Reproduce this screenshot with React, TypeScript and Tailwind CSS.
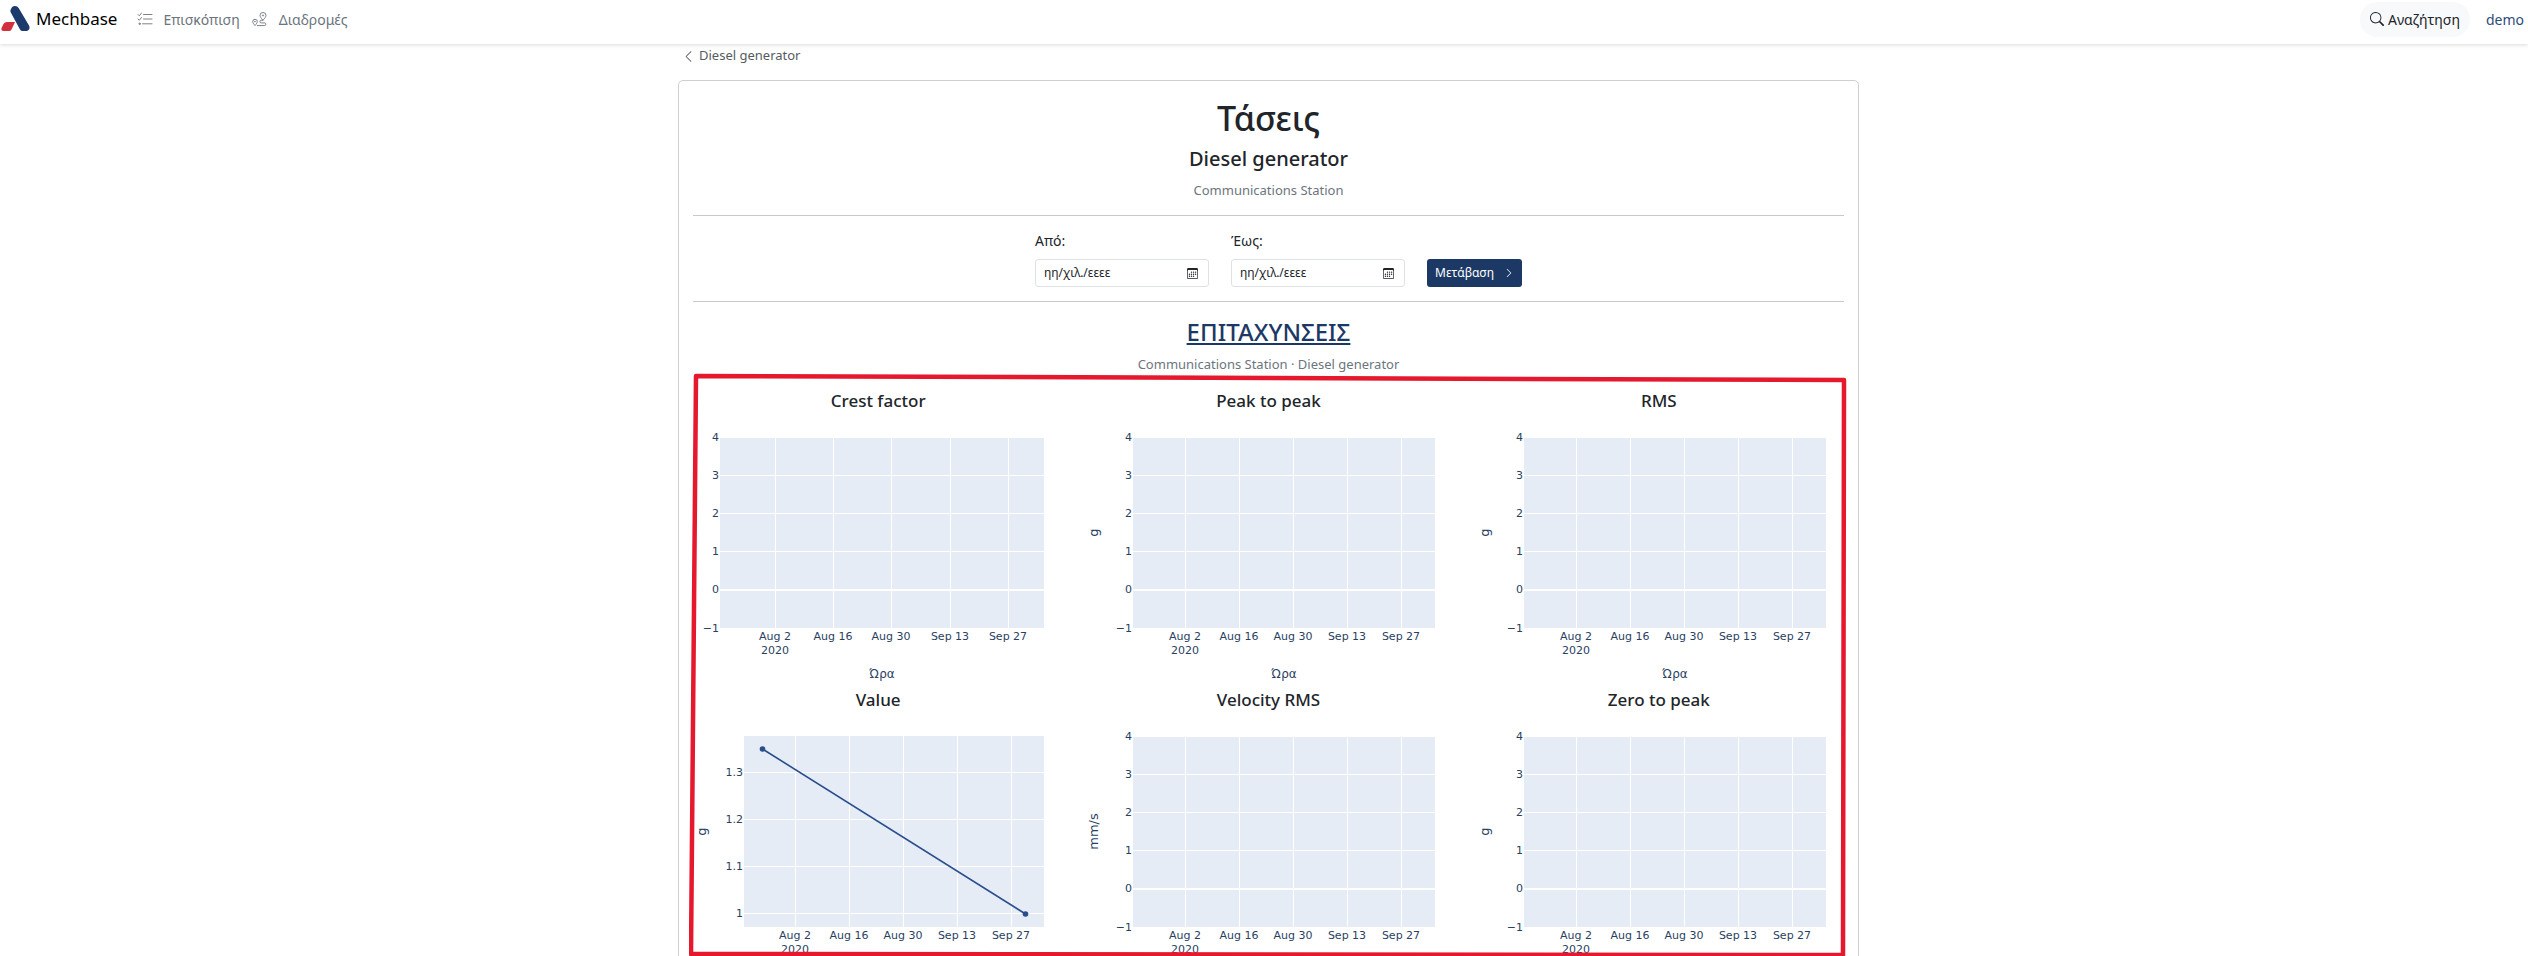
import React from "react";
import { BsSearch, BsChevronLeft, BsChevronRight, BsCalendar3 } from "react-icons/bs";

type Tick = { at: number; label: string; zero?: boolean };
type ChartProps = {
  title: string;
  unit?: string;
  left: number;
  right?: number;
  dates: number[];
  ticks: Tick[];
  points?: [number, number][];
};

const TOP = 24;
const BOTTOM = 215;
const DATE_LABELS = ["Aug 2", "Aug 16", "Aug 30", "Sep 13", "Sep 27"];
const EMPTY_TICKS: Tick[] = [
  { at: 24, label: "4" },
  { at: 62, label: "3" },
  { at: 100, label: "2" },
  { at: 138, label: "1" },
  { at: 176, label: "0", zero: true },
  { at: 215, label: "−1" },
];
const VALUE_TICKS: Tick[] = [
  { at: 60, label: "1.3" },
  { at: 107, label: "1.2" },
  { at: 154, label: "1.1" },
  { at: 201, label: "1" },
];
const MIDDLE_DATES = [112, 166, 220, 274, 328];

const CHARTS: ChartProps[] = [
  { title: "Crest factor", left: 37, right: 361, dates: [92, 150, 208, 267, 325], ticks: EMPTY_TICKS },
  { title: "Peak to peak", unit: "g", left: 60, dates: MIDDLE_DATES, ticks: EMPTY_TICKS },
  { title: "RMS", unit: "g", left: 60, dates: MIDDLE_DATES, ticks: EMPTY_TICKS },
  {
    title: "Value", unit: "g", left: 61, right: 361, dates: MIDDLE_DATES, ticks: VALUE_TICKS,
    points: [[79.5, 37], [342.5, 202]],
  },
  { title: "Velocity RMS", unit: "mm/s", left: 60, dates: MIDDLE_DATES, ticks: EMPTY_TICKS },
  { title: "Zero to peak", unit: "g", left: 60, dates: MIDDLE_DATES, ticks: EMPTY_TICKS },
];

function Chart({ title, unit, left, right = 362, dates, ticks, points }: ChartProps) {
  const unitX = points ? 23 : 25;
  const middle = (TOP + BOTTOM) / 2;
  return (
    <section className="flex flex-col items-center">
      <h3 className="text-[17px] leading-6 font-medium text-[#212529]">{title}</h3>
      <svg
        width="390"
        height="275"
        viewBox="0 0 390 275"
        role="img"
        aria-label={title}
        fill="#2a3f5f"
        className="shrink-0 text-[11px] [font-family:'DejaVu_Sans',sans-serif]"
      >
        <rect x={left} y={TOP} width={right - left} height={BOTTOM - TOP} fill="#e5ecf6" />
        {dates.map((x, i) => (
          <g key={x}>
            <rect x={x} y={TOP} width="1" height={BOTTOM - TOP} fill="#fff" />
            <text x={x} y="227" textAnchor="middle">{DATE_LABELS[i]}</text>
          </g>
        ))}
        <text x={dates[0]} y="241" textAnchor="middle">2020</text>
        {ticks.map((t) => (
          <g key={t.label}>
            <rect x={left} y={t.at} width={right - left} height={t.zero ? 2 : 1} fill="#fff" />
            <text x={left - 1} y={t.at + 4} textAnchor="end">{t.label}</text>
          </g>
        ))}
        {points && (
          <g fill="#2a4d8c">
            <polyline points={points.map((p) => p.join(",")).join(" ")} fill="none" stroke="#2a4d8c" strokeWidth="1.6" />
            {points.map(([x, y]) => <circle key={x} cx={x} cy={y} r="2.8" />)}
          </g>
        )}
        {unit && (
          <text
            x={unitX}
            y={middle}
            textAnchor="middle"
            className="text-[13px]"
            transform={`rotate(-90 ${unitX} ${middle})`}
          >
            {unit}
          </text>
        )}
        <text x={(left + right) / 2} y="265" textAnchor="middle" className="text-[12px]">Ώρα</text>
      </svg>
    </section>
  );
}

function Logo() {
  return (
    <svg width="30" height="28" viewBox="0 0 30 28" aria-hidden="true">
      <path
        d="M11 4 Q12 1 15 1 Q17.500 1 18.800 3.200 L29 20.500 Q30.500 24 28 25.500 Q27 26 25 26 H22.500 Q21 26 20 24.500 L10.800 7.500 Q9.800 6 11 4Z"
        fill="#1c3b6c"
      />
      <path d="M7 17 H15 L11.500 24.500 Q10.700 26 9 26 H3.500 Q0.800 26 1.500 23 L3.500 19 Q4.500 17 7 17Z" fill="#d2303f" />
    </svg>
  );
}

function TasksIcon() {
  return (
    <svg width="16" height="14" viewBox="0 0 16 14" fill="none" stroke="currentColor" strokeWidth="0.900" strokeLinecap="round" aria-hidden="true">
      <path d="M1 2.500 L2.300 3.800 L4.500 1" />
      <path d="M1 7 L2.300 8.300 L4.500 5.500" />
      <circle cx="2.600" cy="11.800" r="0.700" />
      <path d="M6.500 2.500 H15 M6.500 7 H15 M5.500 11.800 H15" />
    </svg>
  );
}

function RouteIcon() {
  return (
    <svg width="17" height="15" viewBox="0 0 17 15" fill="none" stroke="currentColor" strokeWidth="0.900" aria-hidden="true">
      <path d="M11 8.300 C9 6 8 4.500 8 3.300 a3 2.800 0 0 1 6 0 C14 4.500 13 6 11 8.300Z" />
      <circle cx="11" cy="3.500" r="0.600" />
      <path d="M3 13.500 C1.500 11.800 0.700 10.500 0.700 9.500 a2.300 2.200 0 0 1 4.600 0 C5.300 10.500 4.500 11.800 3 13.500Z" />
      <circle cx="3" cy="9.600" r="0.400" />
      <path d="M11 8.300 H9.200 a1.200 1.200 0 0 0 0 2.600 h3.300 a1.300 1.300 0 0 1 0 2.700 H5" />
    </svg>
  );
}

function DateField({ id, label }: { id: string; label: string }) {
  return (
    <div className="flex w-[174px] flex-col gap-2">
      <label htmlFor={id} className="text-[14px] leading-5">{label}</label>
      <div className="flex h-7 items-center rounded-[3px] border border-[#dee2e6] pr-2.5 pl-2">
        <input
          id={id}
          type="text"
          placeholder="ηη/χιλ./εεεε"
          className="w-full min-w-0 flex-1 bg-transparent text-[12px] outline-none placeholder:text-[#212529]"
        />
        <BsCalendar3 size={11} aria-hidden="true" />
      </div>
    </div>
  );
}

export default function App() {
  return (
    <div className="flex h-screen flex-col bg-white text-[#212529] [font-family:'Noto_Sans',sans-serif]">
      <header className="relative z-10 flex h-11 shrink-0 items-center justify-between bg-white pr-1 pb-1.5 shadow-[0_1px_4px_rgba(0,0,0,0.15)]">
        <div className="flex items-center">
          <a href="#" className="flex items-center gap-1.5 text-[17px] text-black">
            <Logo />
            Mechbase
          </a>
          <nav className="ml-5 flex items-center gap-3 text-[14px] text-[#6c757d]">
            <a href="#" className="flex items-center gap-2.5"><TasksIcon />Επισκόπιση</a>
            <a href="#" className="flex items-center gap-2.5"><RouteIcon />Διαδρομές</a>
          </nav>
        </div>
        <div className="flex items-center gap-4 text-[14px]">
          <button type="button" className="flex h-[35px] items-center gap-1 rounded-full bg-[#f8f9fb] px-2.5 text-[#212529]">
            <BsSearch size={14} />
            Αναζήτηση
          </button>
          <a href="#" className="text-[#2f4b7c]">demo</a>
        </div>
      </header>

      <main className="min-h-0 flex-1 overflow-x-hidden overflow-y-auto pl-[9px] [scrollbar-width:none]">
        <div className="mx-auto max-w-[1181px]">
          <a href="#" className="flex h-6 items-center gap-1 pl-1 text-[13px] text-[#555b61]">
            <BsChevronLeft size={13} />
            Diesel generator
          </a>

          <div className="relative mt-3 rounded-[5px] border border-[#cfcfcf] px-3.5 pt-[17px]">
            <div className="flex flex-col items-center pb-[15px] text-center">
              <h1 className="text-[34px] leading-10 font-medium">Τάσεις</h1>
              <h2 className="mt-[7px] text-[20px] leading-7 font-medium">Diesel generator</h2>
              <p className="mt-[7px] text-[13px] leading-5 text-[#6c757d]">Communications Station</p>
            </div>
            <hr className="border-[#c8c9ca]" />
            <form className="flex items-end justify-center gap-[22px] pt-[15px] pb-3.5 pl-5">
              <DateField id="from" label="Από:" />
              <DateField id="to" label="Έως:" />
              <button type="button" className="flex h-7 w-[95px] items-center justify-between rounded-[3px] bg-[#1c3966] px-2 text-[12px] text-white">
                Μετάβαση
                <BsChevronRight size={10} />
              </button>
            </form>
            <hr className="border-[#c8c9ca]" />
            <div className="flex flex-col items-center pt-3.5 text-center">
              <a href="#" className="text-[24px] leading-8 font-medium text-[#1c3966] underline decoration-2 underline-offset-2">ΕΠΙΤΑΧΥΝΣΕΙΣ</a>
              <p className="mt-1.5 text-[13px] leading-5 text-[#6c757d]">Communications Station · Diesel generator</p>
            </div>
            <div className="-mx-2.5 mt-[15px] grid grid-cols-3">
              {CHARTS.map((c) => <Chart key={c.title} {...c} />)}
            </div>
            <svg
              width="1160"
              height="586"
              viewBox="0 0 1160 586"
              aria-hidden="true"
              className="pointer-events-none absolute top-[290px] left-2.5"
            >
              <path d="M7 5 L1155 9 L1154 584 L2 583Z" fill="none" stroke="#e5182d" strokeWidth="4.500" strokeLinejoin="round" />
            </svg>
          </div>
        </div>
      </main>
    </div>
  );
}
